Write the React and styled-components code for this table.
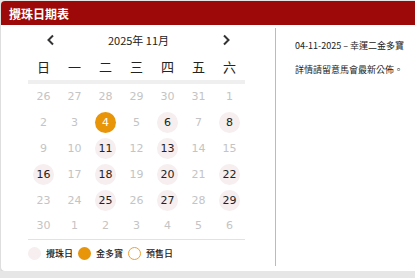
import React from "react";
import styled, { createGlobalStyle } from "styled-components";

const Global = createGlobalStyle`
  html, body {
    margin: 0;
    background: #e6e6e6;
    font-family: "Noto Sans CJK TC", "Liberation Sans", sans-serif;
  }
`;

const Card = styled.div`
  margin: 1px 0 0 1px;
  width: 420px;
  height: 270px;
  background: #fff;
  border-radius: 4px;
  overflow: hidden;
  box-shadow: 0 1px 2px rgba(0, 0, 0, 0.12);
`;

const Header = styled.div`
  height: 24px;
  background: #9d0808;
  color: #fff;
  font-size: 12px;
  font-weight: 700;
  display: flex;
  align-items: center;
  padding-left: 8px;
`;

const Body = styled.div`
  display: flex;
  padding-top: 3px;
`;

const Left = styled.div`
  width: 275px;
  padding-left: 27px;
  box-sizing: border-box;
  border-right: 1px solid #bbb;
  height: 238px;
`;

const Calendar = styled.div`
  width: 217px;
`;

const MonthBar = styled.div`
  height: 24px;
  display: flex;
  align-items: center;
  justify-content: space-between;
  padding: 0 14px 0 18px;
  font-size: 11px;
  color: #222;
`;

const Arrow = styled.button`
  border: 0;
  background: none;
  padding: 0;
  display: flex;
  color: #333;
  cursor: pointer;
`;

const Grid = styled.div`
  display: grid;
  grid-template-columns: repeat(7, 31px);
  grid-auto-rows: 25.8px;
`;

const WeekHead = styled(Grid)`
  grid-auto-rows: 28px;
  border-bottom: 4px solid #efefef;
  font-size: 13px;
  color: #222;
`;

const Cell = styled.div`
  display: flex;
  align-items: center;
  justify-content: center;
`;

const Day = styled.span`
  width: 21px;
  height: 21px;
  border-radius: 50%;
  display: flex;
  align-items: center;
  justify-content: center;
  font-size: 11px;
  font-family: "DejaVu Sans", sans-serif;
  color: ${(p) => (p.$kind === "jackpot" ? "#fff" : p.$kind === "draw" ? "#222" : "#c4c4c4")};
  background: ${(p) => (p.$kind === "jackpot" ? "#e8950a" : p.$kind === "draw" ? "#f6eeef" : "transparent")};
`;

const Legend = styled.div`
  border-top: 1px solid #e2e2e2;
  display: flex;
  align-items: center;
  height: 27px;
  font-size: 9px;
  font-weight: 500;
  color: #222;
`;

const Dot = styled.span`
  width: 13px;
  height: 13px;
  border-radius: 50%;
  box-sizing: border-box;
  margin-right: 5px;
  background: ${(p) => p.$bg};
  border: ${(p) => (p.$ring ? "1px solid #f0a030" : "none")};
`;

const LegendItem = styled.span`
  display: flex;
  align-items: center;
  margin-right: 5px;
`;

const Right = styled.div`
  padding: 6px 0 0 19px;
  font-size: 9px;
  color: #222;
  line-height: 24px;
`;

const weekdays = ["日", "一", "二", "三", "四", "五", "六"];
const draws = [6, 8, 11, 13, 16, 18, 20, 22, 25, 27, 29];

const days = [
  ...[26, 27, 28, 29, 30, 31].map((d) => ({ d, out: true })),
  ...Array.from({ length: 30 }, (_, i) => ({ d: i + 1 })),
  ...[1, 2, 3, 4, 5, 6].map((d) => ({ d, out: true })),
];

const Chevron = ({ dir }) => (
  <svg width="10" height="12" viewBox="0 0 10 12">
    <path
      d={dir === "left" ? "M7 1.5 L2.5 6 L7 10.5" : "M3 1.5 L7.5 6 L3 10.5"}
      fill="none"
      stroke="#333"
      strokeWidth="2"
    />
  </svg>
);

export default function App() {
  return (
    <>
      <Global />
      <Card>
        <Header>攪珠日期表</Header>
        <Body>
          <Left>
            <Calendar>
              <MonthBar>
                <Arrow><Chevron dir="left" /></Arrow>
                <span>2025年 11月</span>
                <Arrow><Chevron dir="right" /></Arrow>
              </MonthBar>
              <WeekHead>
                {weekdays.map((w) => (
                  <Cell key={w}>{w}</Cell>
                ))}
              </WeekHead>
              <Grid>
                {days.map((x, i) => {
                  const kind = x.out ? "out" : x.d === 4 ? "jackpot" : draws.includes(x.d) ? "draw" : "plain";
                  return (
                    <Cell key={i}>
                      <Day $kind={kind}>{x.d}</Day>
                    </Cell>
                  );
                })}
              </Grid>
              <Legend>
                <LegendItem><Dot $bg="#f6eeef" />攪珠日</LegendItem>
                <LegendItem><Dot $bg="#e8950a" />金多寶</LegendItem>
                <LegendItem><Dot $bg="#fff" $ring />預售日</LegendItem>
              </Legend>
            </Calendar>
          </Left>
          <Right>
            <div>04-11-2025 – 幸運二金多寶</div>
            <div>詳情請留意馬會最新公佈。</div>
          </Right>
        </Body>
      </Card>
    </>
  );
}
